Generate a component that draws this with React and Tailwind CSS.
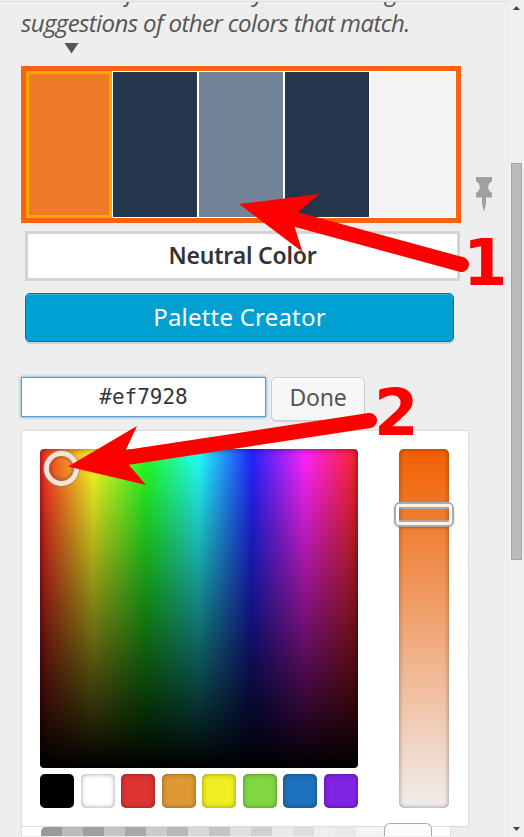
const palette = ['bg-[#24364b]', 'bg-[#738498]', 'bg-[#24364b]', 'bg-[#f3f3f3]'];

const swatches = [
  'bg-black',
  'bg-white',
  'bg-[#dd3333]',
  'bg-[#dd9933]',
  'bg-[#eeee22]',
  'bg-[#81d742]',
  'bg-[#1e73be]',
  'bg-[#8224e3]',
];

const checks = [
  'bg-[#999]', 'bg-[#bababa]', 'bg-[#9f9f9f]', 'bg-[#c3c3c3]', 'bg-[#a9a9a9]', 'bg-[#cbcbcb]',
  'bg-[#b7b7b7]', 'bg-[#d8d8d8]', 'bg-[#c4c4c4]', 'bg-[#e0e0e0]', 'bg-[#d0d0d0]', 'bg-[#eaeaea]',
  'bg-[#dddddd]', 'bg-[#efefef]', 'bg-[#e8e8e8]', 'bg-[#f5f5f5]', 'bg-[#f4f4f4]',
];

function Description() {
  return (
    <div className="h-[38px] overflow-hidden">
      <div className="-mt-[26px] font-['Open_Sans',sans-serif] text-[24px] leading-[31px] tracking-[-0.6px] italic text-[#555] whitespace-nowrap">
        <div className="flex">
          <span className="w-[112px] text-right">of</span>
          <span className="w-[131px] text-right">y</span>
          <span className="w-[133px] text-right">g</span>
        </div>
        <div>suggestions of other colors that match.</div>
      </div>
    </div>
  );
}

function Palette() {
  return (
    <div className="flex h-[157px] w-[440px] border-5 border-[#ff6014]">
      <div className="w-[86px] border-3 border-[#ffa500] bg-[#f07a2a]" />
      {palette.map((c, i) => (
        <div key={i} className={`w-[86px] border border-white ${c}`} />
      ))}
    </div>
  );
}

function Picker() {
  return (
    <div className="relative z-10 mt-[9px] flex h-[397px] w-[448px] justify-between border border-[#ddd] bg-white py-[18px] pr-[19px] pl-[18px]">
      <div className="w-[318px]">
        <div className="relative h-[319px] rounded-[4px] bg-[linear-gradient(to_bottom,transparent,#000),linear-gradient(to_right,#ff2424,#ffff24,#24ff24,#24ffff,#2424ff,#ff24ff,#ff2424)] shadow-[inset_0_0_7px_rgba(0,0,0,0.55)]">
          <div className="absolute top-px left-[3px] size-[37px] rounded-full border border-[#a08878]/80">
            <div className="size-full rounded-full border-5 border-[#f0e4dc]">
              <div className="size-full rounded-full border-2 border-[#8a6040]/50 shadow-[inset_0_0_2px_rgba(0,0,0,0.3)]" />
            </div>
          </div>
        </div>
        <div className="mt-[6px] flex justify-between">
          {swatches.map((c) => (
            <div key={c} className={`size-[34px] rounded-[5px] shadow-[inset_0_0_5px_rgba(0,0,0,0.4)] ${c}`} />
          ))}
        </div>
      </div>
      <div className="relative h-[359px] w-[50px] rounded-[5px] bg-[linear-gradient(to_bottom,#f06000,#f0eeed)] shadow-[inset_0_0_5px_rgba(0,0,0,0.4)]">
        <div className="absolute top-[53px] -left-[5px] h-[25px] w-[60px] rounded-[6px] border-2 border-[#aaa] shadow-[0_1px_2px_rgba(0,0,0,0.25)]">
          <div className="h-full rounded-[4px] border-3 border-white/90">
            <div className="h-full border-y-2 border-[#aaa]/90" />
          </div>
        </div>
      </div>
    </div>
  );
}

function Annotations() {
  return (
    <svg className="absolute inset-0 z-20" width="524" height="837" viewBox="0 0 524 837">
      <g fill="#f00" stroke="#f00">
        <path stroke="none" d="M239 204 319 194 298.500 212 294.500 226.500 302.500 252Z" />
        <path strokeWidth="15" strokeLinecap="round" d="M298 220 461.500 264.500" />
        <path stroke="none" d="M68 466.500 137 426 126 449.500 129 465 146 485Z" />
        <path strokeWidth="15" strokeLinecap="round" d="M130 457 369.500 420.500" />
      </g>
      <g fill="#f00" fontFamily="DejaVu Sans" fontWeight="700" fontSize="64">
        <text x="463" y="285">1</text>
        <text x="374" y="435">2</text>
      </g>
    </svg>
  );
}

export default function App() {
  return (
    <div className="relative flex h-[837px] w-[524px] overflow-hidden bg-[#eee] font-['Noto_Sans','Open_Sans',sans-serif]">
      <div className="h-[837px] w-[509px] overflow-hidden">
        <div className="h-[2px] border-b border-[#ddd]" />
        <div className="flex h-[834px] flex-col overflow-hidden pl-[21px]">
          <Description />
          <svg className="mt-[3px] ml-[43px] shrink-0" width="15" height="11" viewBox="0 0 15 11">
            <path d="M.5 0h14L7.500 10.500Z" fill="#555" />
          </svg>
          <div className="mt-[12px] flex shrink-0">
            <Palette />
            <svg className="mt-[111px] ml-[14px]" width="18" height="35" viewBox="0 0 18 35">
              <path fill="#a0a0a0" d="M1 0h16v4.500c-5 2.500-5 8.500-.5 11l.5 1v4h-6V27L9 35 7 27v-6.500H1v-4l.5-1c4.500-2.500 4.500-8.500-.5-11Z" />
            </svg>
          </div>
          <div className="mt-[8px] ml-[4px] flex h-[50px] w-[435px] shrink-0 items-center justify-center border-3 border-[#d3d3d3] bg-white pb-[2px] text-[23px] font-semibold tracking-[-0.2px] text-[#333]">
            Neutral Color
          </div>
          <button className="mt-[12px] ml-[4px] flex h-[49px] w-[429px] shrink-0 items-center justify-center rounded-[5px] border border-[#0073aa] bg-[#00a0d2] pb-[2px] text-[24px] tracking-[0.2px] text-white shadow-[inset_0_1px_0_rgba(120,200,230,0.5),0_2px_0_rgba(0,0,0,0.12)]">
            Palette Creator
          </button>
          <div className="mt-[35px] flex h-[44px] shrink-0 gap-[5px]">
            <div className="flex h-[40px] w-[245px] items-center justify-center border border-[#5b9dd9] bg-white pt-px font-['DejaVu_Sans_Mono',monospace] text-[21px] text-[#32373c] shadow-[0_0_3px_rgba(30,140,190,0.8)]">
              #ef7928
            </div>
            <button className="flex h-[44px] w-[94px] items-center justify-center rounded-[5px] border border-[#ccc] bg-[#f7f7f7] pb-[3px] text-[23px] tracking-[-0.2px] text-[#555] shadow-[inset_0_1px_0_#fff,0_1px_0_rgba(0,0,0,0.1)]">
              Done
            </button>
          </div>
          <Picker />
          <div className="relative flex h-[9px] w-[430px] shrink-0 border-x border-[#ddd] bg-white pl-[19px]">
            <div className="flex h-[9px] w-[350px] overflow-hidden rounded-tl-[5px] shadow-[inset_0_0_5px_rgba(0,0,0,0.4)]">
              {checks.map((c, i) => (
                <div key={i} className={`h-full w-[21px] shrink-0 ${c}`} />
              ))}
            </div>
          </div>
        </div>
      </div>
      <div className="flex w-[15px] flex-col items-center bg-[#f0f0f0]">
        <svg className="mt-[6px]" width="7" height="4" viewBox="0 0 7 4">
          <path d="M0 4h7L3.500 0Z" fill="#444" />
        </svg>
        <div className="mt-[153px] h-[397px] w-[11px] border border-[#a5a5a5] bg-[#bbb]" />
        <svg className="mt-[267px]" width="7" height="4" viewBox="0 0 7 4">
          <path d="M0 0h7L3.500 4Z" fill="#444" />
        </svg>
      </div>
      <div className="absolute top-[823px] left-[384px] z-10 h-[13px] w-[48px] rounded-t-[6px] border border-b-0 border-[#aaa] bg-[#fcfcfc]" />
      <Annotations />
    </div>
  );
}
